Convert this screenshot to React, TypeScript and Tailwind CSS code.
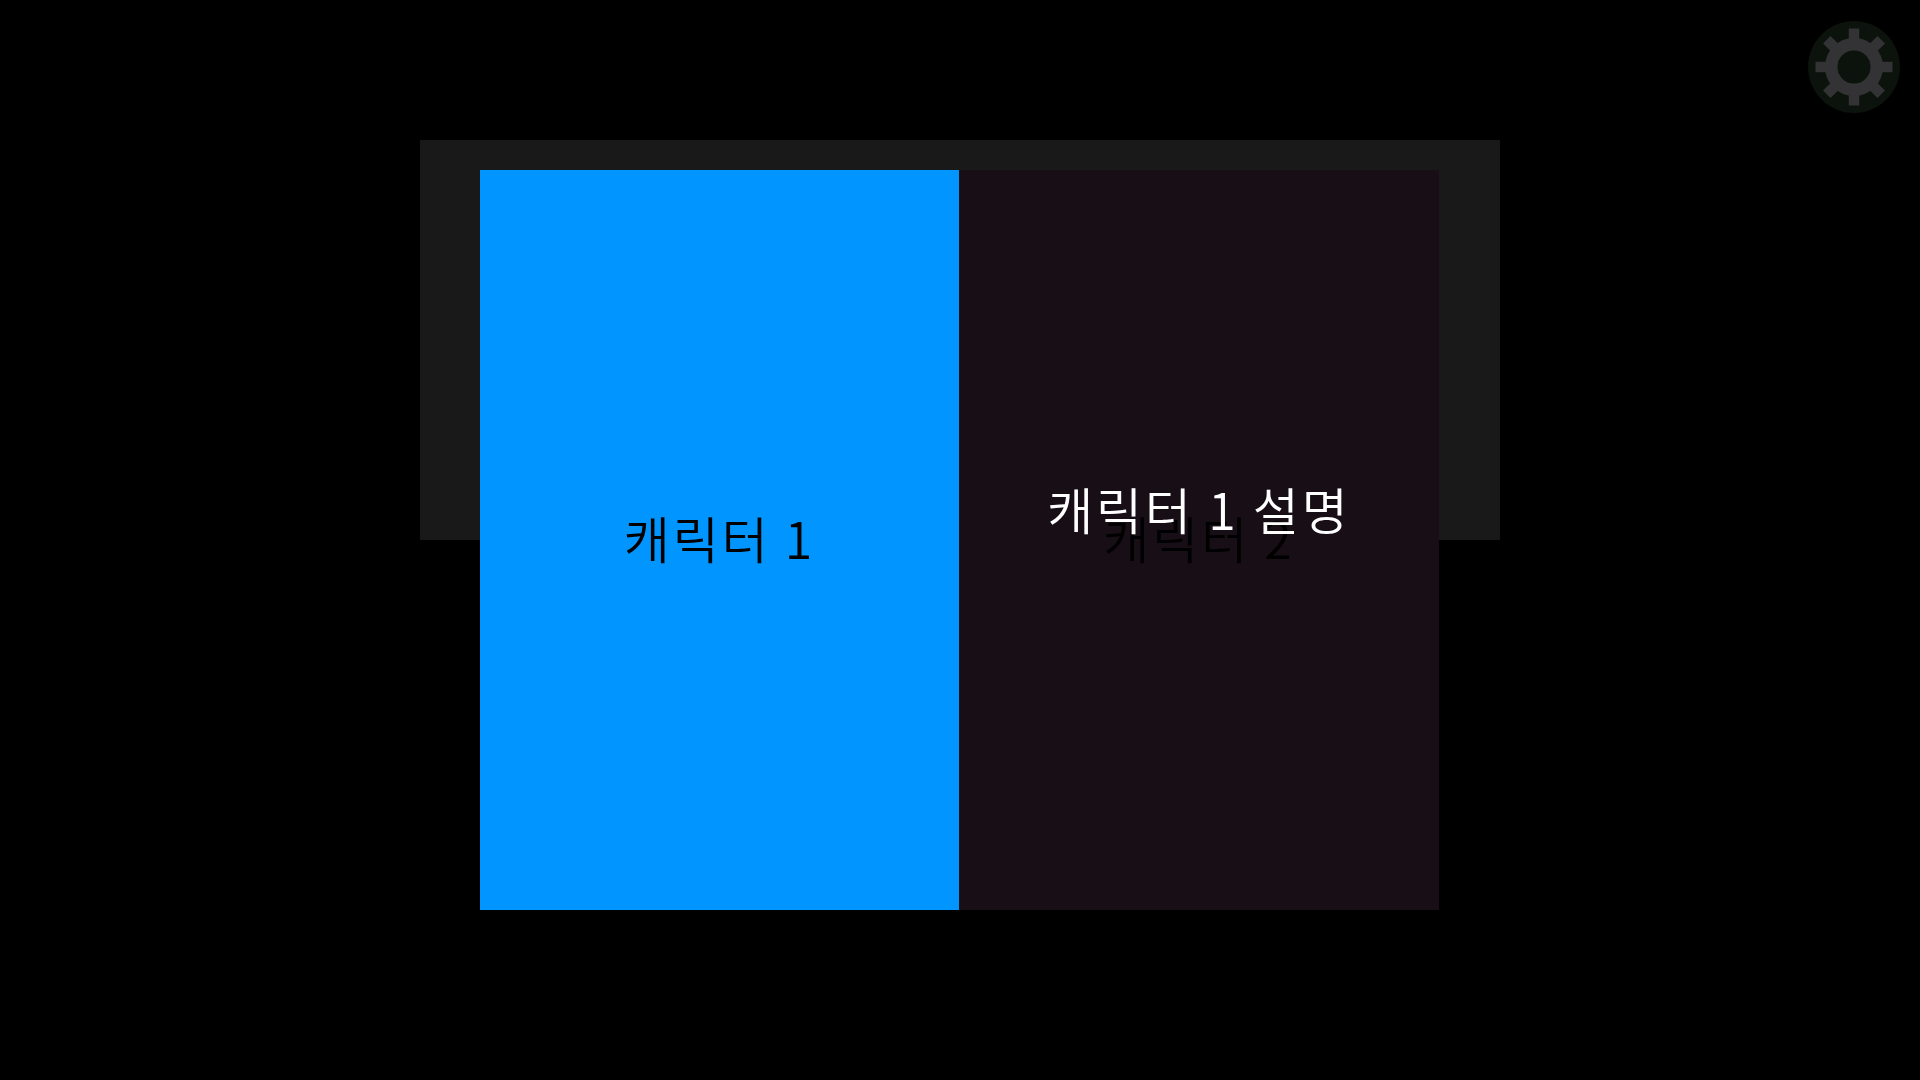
const FONT = "font-['Noto_Sans_CJK_KR','Noto_Sans',sans-serif]";

const GearIcon = () => (
  <svg width="92" height="92" viewBox="0 0 92 92">
    <circle cx="46" cy="46" r="46" fill="#0c120c" />
    <g fill="#333335">
      {[0, 45, 90, 135].map((deg) => (
        <rect key={deg} x="7.5" y="40.75" width="77" height="10.5" transform={`rotate(${deg} 46 46)`} />
      ))}
    </g>
    <circle cx="46" cy="46" r="22.75" fill="none" stroke="#333335" strokeWidth="12.5" />
    <circle cx="46" cy="46" r="16.5" fill="#0c120c" />
  </svg>
);

export default function App() {
  return (
    <div className={`relative min-h-screen bg-black pt-[140px] ${FONT}`}>
      <div className="absolute top-[21px] right-[20px]">
        <GearIcon />
      </div>

      <div className="relative mx-auto h-[400px] w-[1080px] bg-[#191919]">
        <div className="absolute top-[30px] left-[60px] grid h-[740px] w-[959px] grid-cols-[479px_480px]">
          <div className="flex items-center justify-center bg-[#0095ff] pb-[6px] text-[50px] font-[350] tracking-[3px] text-black">
            캐릭터 1
          </div>
          <div className="relative flex items-center justify-center bg-[#180e16] pb-[6px] text-[50px] font-[350] tracking-[3px] text-black">
            캐릭터 2
            <div className="absolute inset-x-0 top-[301px] text-center text-white">
              캐릭터 1 설명
            </div>
          </div>
        </div>
      </div>
    </div>
  );
}
